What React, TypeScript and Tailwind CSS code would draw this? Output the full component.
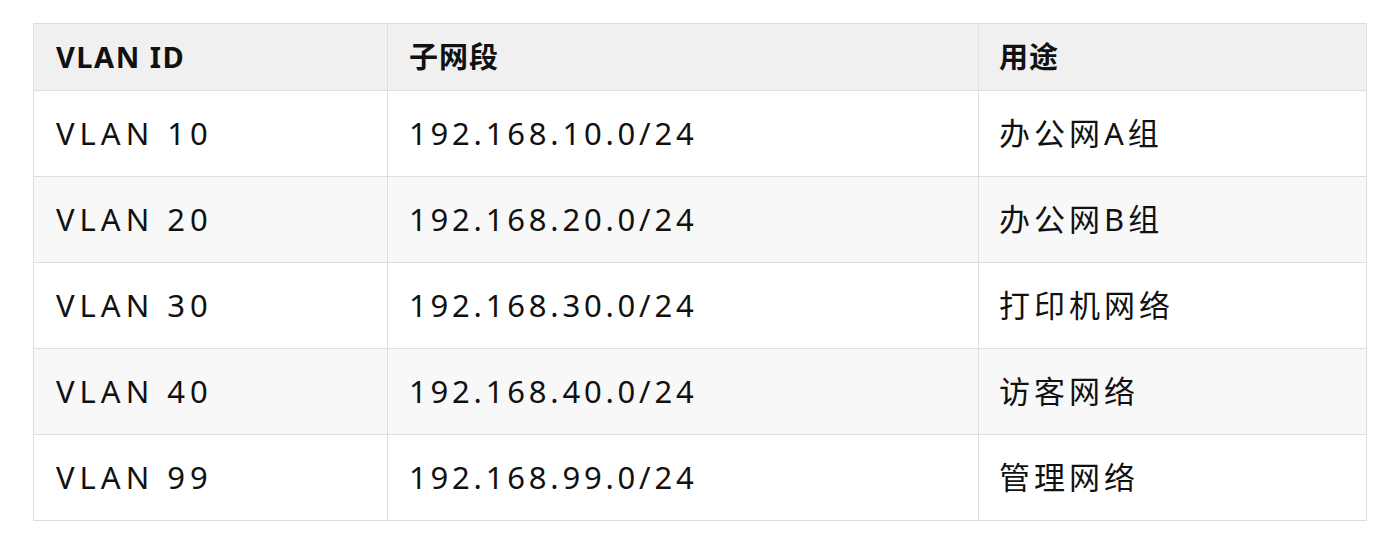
import React from 'react';

const rows = [
    { id: 'VLAN 10', subnet: '192.168.10.0/24', usage: '办公网A组' },
    { id: 'VLAN 20', subnet: '192.168.20.0/24', usage: '办公网B组' },
    { id: 'VLAN 30', subnet: '192.168.30.0/24', usage: '打印机网络' },
    { id: 'VLAN 40', subnet: '192.168.40.0/24', usage: '访客网络' },
    { id: 'VLAN 99', subnet: '192.168.99.0/24', usage: '管理网络' },
];

export default function App() {
    return <div className="w-[1398px] h-[556px] bg-white pt-[23px] pl-[33px]" style={{ fontFamily: '"Noto Sans", "Noto Sans CJK SC", sans-serif' }}>
        <table className="border-collapse table-fixed w-[1333px] text-[#111]">
            <colgroup>
                <col className="w-[354px]" />
                <col className="w-[591px]" />
                <col className="w-[388px]" />
            </colgroup>
            <thead>
                <tr className="bg-[#f0f0f0] h-[67px]">
                    <th className="border border-[#dedede] text-left font-bold text-[29px] tracking-[1.5px] pl-[22px]">VLAN ID</th>
                    <th className="border border-[#dedede] text-left font-bold text-[29px] tracking-[1px] pl-[21px]">子网段</th>
                    <th className="border border-[#dedede] text-left font-bold text-[29px] tracking-[1px] pl-[20px]">用途</th>
                </tr>
            </thead>
            <tbody>
                {rows.map((r, i) => <tr key={r.id} className={`h-[86px] ${i % 2 === 1 ? 'bg-[#f8f8f8]' : 'bg-white'}`}>
                    <td className="border border-[#dedede] text-[31px] tracking-[5px] pl-[22px]">{r.id}</td>
                    <td className="border border-[#dedede] text-[31px] tracking-[3.8px] pl-[21px]">{r.subnet}</td>
                    <td className="border border-[#dedede] text-[31px] tracking-[4px] pl-[20px]">{r.usage}</td>
                </tr>)}
            </tbody>
        </table>
    </div>;
}
